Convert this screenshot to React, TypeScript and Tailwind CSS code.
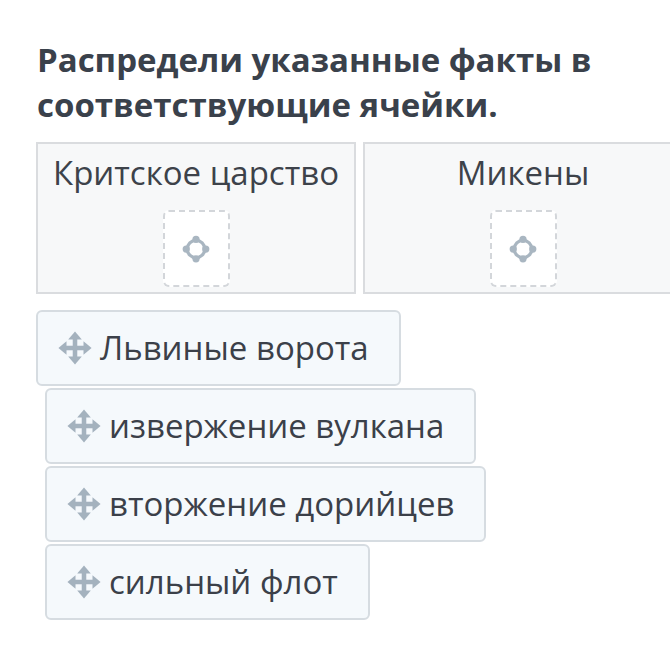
import React from "react";

function DropIcon() {
  return (
    <svg width="30" height="30" viewBox="0 0 24 24" fill="none">
      <circle cx="12" cy="12" r="7" stroke="#a9b6c1" strokeWidth="2.6" />
      <circle cx="12" cy="4.2" r="2.9" fill="#a9b6c1" />
      <circle cx="12" cy="19.8" r="2.9" fill="#a9b6c1" />
      <circle cx="4.2" cy="12" r="2.9" fill="#a9b6c1" />
      <circle cx="19.8" cy="12" r="2.9" fill="#a9b6c1" />
    </svg>
  );
}

function MoveIcon() {
  return (
    <svg width="34" height="34" viewBox="0 0 24 24" fill="#a4b2be">
      <rect x="4" y="10.4" width="16" height="3.2" />
      <rect x="10.4" y="4" width="3.2" height="16" />
      <path d="M12 0.3 L16.8 6 L7.2 6 Z" />
      <path d="M12 23.7 L16.8 18 L7.2 18 Z" />
      <path d="M0.3 12 L6 7.2 L6 16.8 Z" />
      <path d="M23.7 12 L18 7.2 L18 16.8 Z" />
    </svg>
  );
}

const cells = ["Критское царство", "Микены"];

const facts = [
  { text: "Львиные ворота", shift: "ml-0" },
  { text: "извержение вулкана", shift: "ml-[9px]" },
  { text: "вторжение дорийцев", shift: "ml-[9px]" },
  { text: "сильный флот", shift: "ml-[9px]" },
];

export default function App() {
  return (
    <div
      className="w-[670px] h-[656px] overflow-hidden bg-white pl-[36px] pt-[37px] text-[#3b4049]"
      style={{ fontFamily: '"Open Sans", "Noto Sans", sans-serif' }}>
      <h1 className="text-[33px] leading-[45px] font-bold text-[#3a414b] pl-px">
        Распредели указанные факты в<br />
        соответствующие ячейки.
      </h1>

      {/* drop cells */}
      <div className="flex gap-[7px] mt-[15px] w-[700px]">
        {cells.map((c) => (
          <div
            key={c}
            className="w-[320px] h-[152px] shrink-0 border-2 border-[#dadcdf] bg-[#f7f8f9] flex flex-col items-center pt-[9px]">
            <div className="text-[33px] leading-[40px] text-[#3d424a]">{c}</div>
            <div className="mt-[17px] w-[67px] h-[77px] rounded-md border-2 border-dashed border-[#d3d6da] bg-white flex items-center justify-center">
              <DropIcon />
            </div>
          </div>
        ))}
      </div>

      {/* draggable facts */}
      <div className="flex flex-col items-start gap-[2px] mt-[16px]">
        {facts.map((f) => (
          <div
            key={f.text}
            className={`${f.shift} h-[76px] flex items-center gap-[8px] pl-[20px] pr-[30px] rounded-md border-2 border-[#d6dce1] bg-[#f5f9fc]`}>
            <MoveIcon />
            <span className="text-[33px] leading-[40px] text-[#3b4049]">{f.text}</span>
          </div>
        ))}
      </div>
    </div>
  );
}
